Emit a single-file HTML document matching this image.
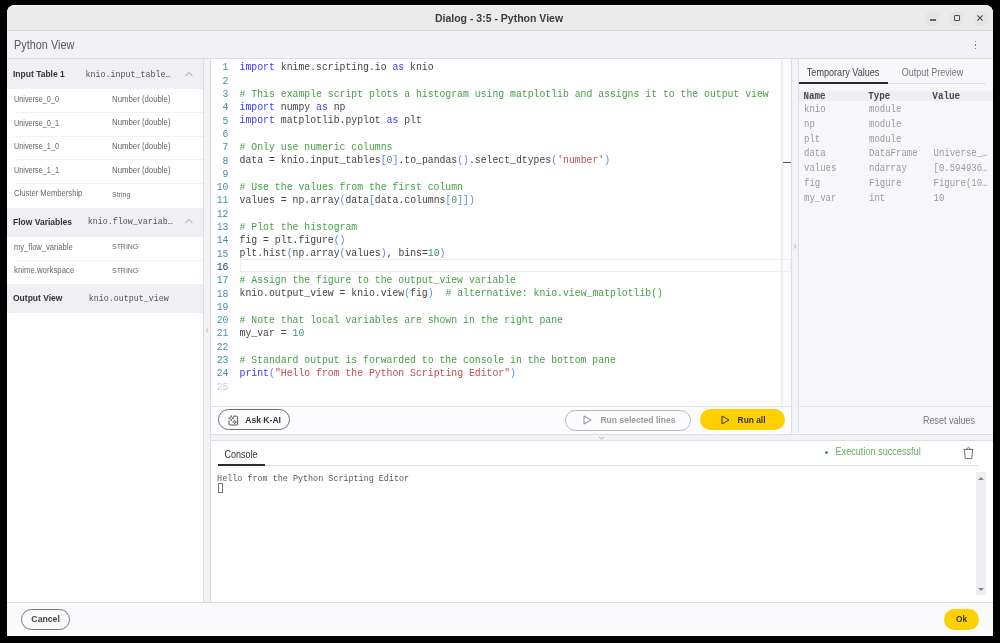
<!DOCTYPE html>
<html><head><meta charset="utf-8"><style>
html,body{margin:0;padding:0;width:1000px;height:643px;overflow:hidden;background:#000;}
#root{position:absolute;left:0;top:0;width:1000px;height:643px;will-change:transform;}
#root>div,#root>svg{position:absolute;}
</style></head><body><div id="root">
<div style="left:0px;top:0px;width:1000px;height:643px;background:#000;"></div>
<div style="left:7px;top:5px;width:986px;height:631px;background:#fdfcfe;border-radius:8px 8px 0 0;overflow:hidden;"></div>
<div style="left:7px;top:5px;width:986px;height:25px;background:#ebebeb;border-radius:8px 8px 0 0;box-shadow:inset 0 1px 0 #f7f7f7;"></div>
<div style="left:7px;top:29.6px;width:986px;height:1.6px;background:#d9d9d9;"></div>
<div style="left:299.00px;top:13.11px;font-family:'Liberation Sans', sans-serif;font-size:10.5px;line-height:10.5px;color:#3c3c3c;font-weight:bold;white-space:pre;width:400px;text-align:center;">Dialog - 3:5 - Python View</div>
<div style="left:925.25px;top:10.899999999999999px;width:15px;height:15px;background:#e5e5e5;border-radius:50%;"></div>
<div style="left:948.9px;top:10.899999999999999px;width:15px;height:15px;background:#e5e5e5;border-radius:50%;"></div>
<div style="left:973.5px;top:10.899999999999999px;width:15px;height:15px;background:#e5e5e5;border-radius:50%;"></div>
<div style="left:930.2px;top:19.4px;width:5.6px;height:1.2px;background:#666;"></div>
<div style="left:953.8px;top:15px;width:6px;height:6px;border:1.1px solid #4a4a4a;border-radius:1px;box-sizing:border-box;"></div>
<svg style="left:977.2px;top:15px" width="6" height="6" viewBox="0 0 6 6"><path d="M0.4 0.4L5.6 5.6M5.6 0.4L0.4 5.6" stroke="#4a4a4a" stroke-width="1.1"/></svg>
<div style="left:7px;top:31px;width:986px;height:27px;background:#f2f1f5;"></div>
<div style="left:7px;top:57.6px;width:986px;height:1.6px;background:#dddce0;"></div>
<div style="left:14.00px;top:40.02px;font-family:'Liberation Sans', sans-serif;font-size:10.9px;line-height:10.9px;color:#5c5c5c;white-space:pre;transform:scaleY(1.12);transform-origin:0 9.23px;">Python View</div>
<div style="left:974.5px;top:40.9px;width:1.2px;height:1.2px;background:#666;border-radius:50%;"></div>
<div style="left:974.5px;top:44.4px;width:1.2px;height:1.2px;background:#666;border-radius:50%;"></div>
<div style="left:974.5px;top:47.9px;width:1.2px;height:1.2px;background:#666;border-radius:50%;"></div>
<div style="left:7px;top:59px;width:196px;height:543px;background:#fff;"></div>
<div style="left:203px;top:59px;width:1px;height:543px;background:#dedde1;"></div>
<div style="left:204px;top:59px;width:6px;height:543px;background:#f3f2f6;"></div>
<div style="left:210px;top:59px;width:1px;height:543px;background:#dedde1;"></div>
<div style="left:7px;top:59px;width:196px;height:29.599999999999994px;background:#f0eff3;"></div>
<div style="left:13.00px;top:70.20px;font-family:'Liberation Sans', sans-serif;font-size:8.5px;line-height:8.5px;color:#333;font-weight:bold;white-space:pre;transform:scaleY(1.12);transform-origin:0 7.20px;">Input Table 1</div>
<div style="left:85.60px;top:70.52px;font-family:'Liberation Mono', monospace;font-size:8.33px;line-height:8.33px;color:#555;white-space:pre;transform:scaleY(1.12);transform-origin:0 6.38px;">knio.input_table…</div>
<svg style="left:185px;top:70.5px" width="8" height="6" viewBox="0 0 8 6"><path d="M0.5 5L4 1.5L7.5 5" stroke="#999" stroke-width="1" fill="none"/></svg>
<div style="left:14.00px;top:96.12px;font-family:'Liberation Sans', sans-serif;font-size:7.3px;line-height:7.3px;color:#666;white-space:pre;transform:scaleY(1.12);transform-origin:0 6.18px;">Universe_0_0</div>
<div style="left:112.00px;top:95.70px;font-family:'Liberation Sans', sans-serif;font-size:7.8px;line-height:7.8px;color:#666;white-space:pre;transform:scaleY(1.12);transform-origin:0 6.60px;">Number (double)</div>
<div style="left:16px;top:111.89999999999999px;width:187px;height:0.8px;background:#f2f2f4;"></div>
<div style="left:14.00px;top:119.72px;font-family:'Liberation Sans', sans-serif;font-size:7.3px;line-height:7.3px;color:#666;white-space:pre;transform:scaleY(1.12);transform-origin:0 6.18px;">Universe_0_1</div>
<div style="left:112.00px;top:119.30px;font-family:'Liberation Sans', sans-serif;font-size:7.8px;line-height:7.8px;color:#666;white-space:pre;transform:scaleY(1.12);transform-origin:0 6.60px;">Number (double)</div>
<div style="left:16px;top:135.5px;width:187px;height:0.8px;background:#f2f2f4;"></div>
<div style="left:14.00px;top:143.32px;font-family:'Liberation Sans', sans-serif;font-size:7.3px;line-height:7.3px;color:#666;white-space:pre;transform:scaleY(1.12);transform-origin:0 6.18px;">Universe_1_0</div>
<div style="left:112.00px;top:142.90px;font-family:'Liberation Sans', sans-serif;font-size:7.8px;line-height:7.8px;color:#666;white-space:pre;transform:scaleY(1.12);transform-origin:0 6.60px;">Number (double)</div>
<div style="left:16px;top:159.1px;width:187px;height:0.8px;background:#f2f2f4;"></div>
<div style="left:14.00px;top:166.92px;font-family:'Liberation Sans', sans-serif;font-size:7.3px;line-height:7.3px;color:#666;white-space:pre;transform:scaleY(1.12);transform-origin:0 6.18px;">Universe_1_1</div>
<div style="left:112.00px;top:166.50px;font-family:'Liberation Sans', sans-serif;font-size:7.8px;line-height:7.8px;color:#666;white-space:pre;transform:scaleY(1.12);transform-origin:0 6.60px;">Number (double)</div>
<div style="left:16px;top:182.7px;width:187px;height:0.8px;background:#f2f2f4;"></div>
<div style="left:14.00px;top:190.22px;font-family:'Liberation Sans', sans-serif;font-size:7.65px;line-height:7.65px;color:#666;white-space:pre;transform:scaleY(1.12);transform-origin:0 6.48px;">Cluster Membership</div>
<div style="left:112.00px;top:190.77px;font-family:'Liberation Sans', sans-serif;font-size:7.0px;line-height:7.0px;color:#666;white-space:pre;transform:scaleY(1.12);transform-origin:0 5.93px;">String</div>
<div style="left:7px;top:207.5px;width:196px;height:29.30000000000001px;background:#f0eff3;"></div>
<div style="left:13.00px;top:217.90px;font-family:'Liberation Sans', sans-serif;font-size:8.5px;line-height:8.5px;color:#333;font-weight:bold;white-space:pre;transform:scaleY(1.12);transform-origin:0 7.20px;">Flow Variables</div>
<div style="left:87.80px;top:218.22px;font-family:'Liberation Mono', monospace;font-size:8.33px;line-height:8.33px;color:#555;white-space:pre;transform:scaleY(1.12);transform-origin:0 6.38px;">knio.flow_variab…</div>
<svg style="left:185px;top:218px" width="8" height="6" viewBox="0 0 8 6"><path d="M0.5 5L4 1.5L7.5 5" stroke="#999" stroke-width="1" fill="none"/></svg>
<div style="left:14.00px;top:243.77px;font-family:'Liberation Sans', sans-serif;font-size:7.6px;line-height:7.6px;color:#666;white-space:pre;transform:scaleY(1.12);transform-origin:0 6.43px;">my_flow_variable</div>
<div style="left:112.00px;top:244.33px;font-family:'Liberation Sans', sans-serif;font-size:6.94px;line-height:6.94px;color:#666;white-space:pre;transform:scaleY(1.12);transform-origin:0 5.87px;">STRING</div>
<div style="left:16px;top:259.6px;width:187px;height:0.8px;background:#f2f2f4;"></div>
<div style="left:14.00px;top:267.20px;font-family:'Liberation Sans', sans-serif;font-size:7.8px;line-height:7.8px;color:#666;white-space:pre;transform:scaleY(1.12);transform-origin:0 6.60px;">knime.workspace</div>
<div style="left:112.00px;top:267.93px;font-family:'Liberation Sans', sans-serif;font-size:6.94px;line-height:6.94px;color:#666;white-space:pre;transform:scaleY(1.12);transform-origin:0 5.87px;">STRING</div>
<div style="left:7px;top:283.5px;width:196px;height:29.30000000000001px;background:#f0eff3;"></div>
<div style="left:13.00px;top:294.40px;font-family:'Liberation Sans', sans-serif;font-size:8.5px;line-height:8.5px;color:#333;font-weight:bold;white-space:pre;transform:scaleY(1.12);transform-origin:0 7.20px;">Output View</div>
<div style="left:88.80px;top:295.32px;font-family:'Liberation Mono', monospace;font-size:8.33px;line-height:8.33px;color:#555;white-space:pre;transform:scaleY(1.12);transform-origin:0 6.38px;">knio.output_view</div>
<svg style="left:204.5px;top:328px" width="4" height="5" viewBox="0 0 4 5"><path d="M3.2 0.5L1 2.5L3.2 4.5" stroke="#aaa" stroke-width="0.9" fill="none"/></svg>
<div style="left:211px;top:59px;width:580px;height:347px;background:#fffeff;"></div>
<div style="left:781.2px;top:59px;width:1.6px;height:347px;background:#efeff2;"></div>
<div style="left:783px;top:59px;width:8px;height:347px;background:#fcfcfd;"></div>
<div style="left:782.8px;top:161.5px;width:8.5px;height:1.8px;background:#555;"></div>
<div style="left:791px;top:59px;width:1px;height:374px;background:#dedde1;"></div>
<div style="left:792px;top:59px;width:6px;height:374px;background:#f3f2f6;"></div>
<div style="left:798px;top:59px;width:1px;height:374px;background:#dedde1;"></div>
<div style="left:240px;top:259.00000000000006px;width:551px;height:13.2px;border:1px solid #eeeeee;box-sizing:border-box;"></div>
<div style="left:-171.50px;top:63.49px;font-family:'Liberation Mono', monospace;font-size:9.8px;line-height:9.8px;color:#4a8fa6;white-space:pre;width:400px;text-align:right;transform:scaleY(1.08);transform-origin:0 7.51px;">1</div>
<div style="left:239.60px;top:62.99px;font-family:'Liberation Mono', monospace;font-size:9.8px;line-height:9.8px;color:#444444;white-space:pre;transform:scaleY(1.12);transform-origin:0 7.51px;"><span style="color:#3a3aff">import</span> knime.scripting.io <span style="color:#3a3aff">as</span> knio</div>
<div style="left:-171.50px;top:76.79px;font-family:'Liberation Mono', monospace;font-size:9.8px;line-height:9.8px;color:#4a8fa6;white-space:pre;width:400px;text-align:right;transform:scaleY(1.08);transform-origin:0 7.51px;">2</div>
<div style="left:-171.50px;top:90.09px;font-family:'Liberation Mono', monospace;font-size:9.8px;line-height:9.8px;color:#4a8fa6;white-space:pre;width:400px;text-align:right;transform:scaleY(1.08);transform-origin:0 7.51px;">3</div>
<div style="left:239.60px;top:89.59px;font-family:'Liberation Mono', monospace;font-size:9.8px;line-height:9.8px;color:#444444;white-space:pre;transform:scaleY(1.12);transform-origin:0 7.51px;"><span style="color:#46a046"># This example script plots a histogram using matplotlib and assigns it to the output view</span></div>
<div style="left:-171.50px;top:103.39px;font-family:'Liberation Mono', monospace;font-size:9.8px;line-height:9.8px;color:#4a8fa6;white-space:pre;width:400px;text-align:right;transform:scaleY(1.08);transform-origin:0 7.51px;">4</div>
<div style="left:239.60px;top:102.89px;font-family:'Liberation Mono', monospace;font-size:9.8px;line-height:9.8px;color:#444444;white-space:pre;transform:scaleY(1.12);transform-origin:0 7.51px;"><span style="color:#3a3aff">import</span> numpy <span style="color:#3a3aff">as</span> np</div>
<div style="left:-171.50px;top:116.69px;font-family:'Liberation Mono', monospace;font-size:9.8px;line-height:9.8px;color:#4a8fa6;white-space:pre;width:400px;text-align:right;transform:scaleY(1.08);transform-origin:0 7.51px;">5</div>
<div style="left:239.60px;top:116.19px;font-family:'Liberation Mono', monospace;font-size:9.8px;line-height:9.8px;color:#444444;white-space:pre;transform:scaleY(1.12);transform-origin:0 7.51px;"><span style="color:#3a3aff">import</span> matplotlib.pyplot <span style="color:#3a3aff">as</span> plt</div>
<div style="left:-171.50px;top:129.99px;font-family:'Liberation Mono', monospace;font-size:9.8px;line-height:9.8px;color:#4a8fa6;white-space:pre;width:400px;text-align:right;transform:scaleY(1.08);transform-origin:0 7.51px;">6</div>
<div style="left:-171.50px;top:143.29px;font-family:'Liberation Mono', monospace;font-size:9.8px;line-height:9.8px;color:#4a8fa6;white-space:pre;width:400px;text-align:right;transform:scaleY(1.08);transform-origin:0 7.51px;">7</div>
<div style="left:239.60px;top:142.79px;font-family:'Liberation Mono', monospace;font-size:9.8px;line-height:9.8px;color:#444444;white-space:pre;transform:scaleY(1.12);transform-origin:0 7.51px;"><span style="color:#46a046"># Only use numeric columns</span></div>
<div style="left:-171.50px;top:156.59px;font-family:'Liberation Mono', monospace;font-size:9.8px;line-height:9.8px;color:#4a8fa6;white-space:pre;width:400px;text-align:right;transform:scaleY(1.08);transform-origin:0 7.51px;">8</div>
<div style="left:239.60px;top:156.09px;font-family:'Liberation Mono', monospace;font-size:9.8px;line-height:9.8px;color:#444444;white-space:pre;transform:scaleY(1.12);transform-origin:0 7.51px;">data = knio.input_tables<span style="color:#5a88f0">[</span><span style="color:#3a9070">0</span><span style="color:#5a88f0">]</span>.to_pandas<span style="color:#5a88f0">()</span>.select_dtypes<span style="color:#5a88f0">(</span><span style="color:#c05050">'number'</span><span style="color:#5a88f0">)</span></div>
<div style="left:-171.50px;top:169.89px;font-family:'Liberation Mono', monospace;font-size:9.8px;line-height:9.8px;color:#4a8fa6;white-space:pre;width:400px;text-align:right;transform:scaleY(1.08);transform-origin:0 7.51px;">9</div>
<div style="left:-171.50px;top:183.19px;font-family:'Liberation Mono', monospace;font-size:9.8px;line-height:9.8px;color:#4a8fa6;white-space:pre;width:400px;text-align:right;transform:scaleY(1.08);transform-origin:0 7.51px;">10</div>
<div style="left:239.60px;top:182.69px;font-family:'Liberation Mono', monospace;font-size:9.8px;line-height:9.8px;color:#444444;white-space:pre;transform:scaleY(1.12);transform-origin:0 7.51px;"><span style="color:#46a046"># Use the values from the first column</span></div>
<div style="left:-171.50px;top:196.49px;font-family:'Liberation Mono', monospace;font-size:9.8px;line-height:9.8px;color:#4a8fa6;white-space:pre;width:400px;text-align:right;transform:scaleY(1.08);transform-origin:0 7.51px;">11</div>
<div style="left:239.60px;top:195.99px;font-family:'Liberation Mono', monospace;font-size:9.8px;line-height:9.8px;color:#444444;white-space:pre;transform:scaleY(1.12);transform-origin:0 7.51px;">values = np.array<span style="color:#5a88f0">(</span>data<span style="color:#5a88f0">[</span>data.columns<span style="color:#5a88f0">[</span><span style="color:#3a9070">0</span><span style="color:#5a88f0">]]</span><span style="color:#5a88f0">)</span></div>
<div style="left:-171.50px;top:209.79px;font-family:'Liberation Mono', monospace;font-size:9.8px;line-height:9.8px;color:#4a8fa6;white-space:pre;width:400px;text-align:right;transform:scaleY(1.08);transform-origin:0 7.51px;">12</div>
<div style="left:-171.50px;top:223.09px;font-family:'Liberation Mono', monospace;font-size:9.8px;line-height:9.8px;color:#4a8fa6;white-space:pre;width:400px;text-align:right;transform:scaleY(1.08);transform-origin:0 7.51px;">13</div>
<div style="left:239.60px;top:222.59px;font-family:'Liberation Mono', monospace;font-size:9.8px;line-height:9.8px;color:#444444;white-space:pre;transform:scaleY(1.12);transform-origin:0 7.51px;"><span style="color:#46a046"># Plot the histogram</span></div>
<div style="left:-171.50px;top:236.39px;font-family:'Liberation Mono', monospace;font-size:9.8px;line-height:9.8px;color:#4a8fa6;white-space:pre;width:400px;text-align:right;transform:scaleY(1.08);transform-origin:0 7.51px;">14</div>
<div style="left:239.60px;top:235.89px;font-family:'Liberation Mono', monospace;font-size:9.8px;line-height:9.8px;color:#444444;white-space:pre;transform:scaleY(1.12);transform-origin:0 7.51px;">fig = plt.figure<span style="color:#5a88f0">()</span></div>
<div style="left:-171.50px;top:249.69px;font-family:'Liberation Mono', monospace;font-size:9.8px;line-height:9.8px;color:#4a8fa6;white-space:pre;width:400px;text-align:right;transform:scaleY(1.08);transform-origin:0 7.51px;">15</div>
<div style="left:239.60px;top:249.19px;font-family:'Liberation Mono', monospace;font-size:9.8px;line-height:9.8px;color:#444444;white-space:pre;transform:scaleY(1.12);transform-origin:0 7.51px;">plt.hist<span style="color:#5a88f0">(</span>np.array<span style="color:#5a88f0">(</span>values<span style="color:#5a88f0">)</span>, bins=<span style="color:#3a9070">10</span><span style="color:#5a88f0">)</span></div>
<div style="left:-171.50px;top:262.99px;font-family:'Liberation Mono', monospace;font-size:9.8px;line-height:9.8px;color:#1b3a7a;white-space:pre;width:400px;text-align:right;transform:scaleY(1.08);transform-origin:0 7.51px;">16</div>
<div style="left:-171.50px;top:276.29px;font-family:'Liberation Mono', monospace;font-size:9.8px;line-height:9.8px;color:#4a8fa6;white-space:pre;width:400px;text-align:right;transform:scaleY(1.08);transform-origin:0 7.51px;">17</div>
<div style="left:239.60px;top:275.79px;font-family:'Liberation Mono', monospace;font-size:9.8px;line-height:9.8px;color:#444444;white-space:pre;transform:scaleY(1.12);transform-origin:0 7.51px;"><span style="color:#46a046"># Assign the figure to the output_view variable</span></div>
<div style="left:-171.50px;top:289.59px;font-family:'Liberation Mono', monospace;font-size:9.8px;line-height:9.8px;color:#4a8fa6;white-space:pre;width:400px;text-align:right;transform:scaleY(1.08);transform-origin:0 7.51px;">18</div>
<div style="left:239.60px;top:289.09px;font-family:'Liberation Mono', monospace;font-size:9.8px;line-height:9.8px;color:#444444;white-space:pre;transform:scaleY(1.12);transform-origin:0 7.51px;">knio.output_view = knio.view<span style="color:#5a88f0">(</span>fig<span style="color:#5a88f0">)</span>  <span style="color:#46a046"># alternative: knio.view_matplotlib()</span></div>
<div style="left:-171.50px;top:302.89px;font-family:'Liberation Mono', monospace;font-size:9.8px;line-height:9.8px;color:#4a8fa6;white-space:pre;width:400px;text-align:right;transform:scaleY(1.08);transform-origin:0 7.51px;">19</div>
<div style="left:-171.50px;top:316.19px;font-family:'Liberation Mono', monospace;font-size:9.8px;line-height:9.8px;color:#4a8fa6;white-space:pre;width:400px;text-align:right;transform:scaleY(1.08);transform-origin:0 7.51px;">20</div>
<div style="left:239.60px;top:315.69px;font-family:'Liberation Mono', monospace;font-size:9.8px;line-height:9.8px;color:#444444;white-space:pre;transform:scaleY(1.12);transform-origin:0 7.51px;"><span style="color:#46a046"># Note that local variables are shown in the right pane</span></div>
<div style="left:-171.50px;top:329.49px;font-family:'Liberation Mono', monospace;font-size:9.8px;line-height:9.8px;color:#4a8fa6;white-space:pre;width:400px;text-align:right;transform:scaleY(1.08);transform-origin:0 7.51px;">21</div>
<div style="left:239.60px;top:328.99px;font-family:'Liberation Mono', monospace;font-size:9.8px;line-height:9.8px;color:#444444;white-space:pre;transform:scaleY(1.12);transform-origin:0 7.51px;">my_var = <span style="color:#3a9070">10</span></div>
<div style="left:-171.50px;top:342.79px;font-family:'Liberation Mono', monospace;font-size:9.8px;line-height:9.8px;color:#4a8fa6;white-space:pre;width:400px;text-align:right;transform:scaleY(1.08);transform-origin:0 7.51px;">22</div>
<div style="left:-171.50px;top:356.09px;font-family:'Liberation Mono', monospace;font-size:9.8px;line-height:9.8px;color:#4a8fa6;white-space:pre;width:400px;text-align:right;transform:scaleY(1.08);transform-origin:0 7.51px;">23</div>
<div style="left:239.60px;top:355.59px;font-family:'Liberation Mono', monospace;font-size:9.8px;line-height:9.8px;color:#444444;white-space:pre;transform:scaleY(1.12);transform-origin:0 7.51px;"><span style="color:#46a046"># Standard output is forwarded to the console in the bottom pane</span></div>
<div style="left:-171.50px;top:369.39px;font-family:'Liberation Mono', monospace;font-size:9.8px;line-height:9.8px;color:#4a8fa6;white-space:pre;width:400px;text-align:right;transform:scaleY(1.08);transform-origin:0 7.51px;">24</div>
<div style="left:239.60px;top:368.89px;font-family:'Liberation Mono', monospace;font-size:9.8px;line-height:9.8px;color:#444444;white-space:pre;transform:scaleY(1.12);transform-origin:0 7.51px;"><span style="color:#3a3aff">print</span><span style="color:#5a88f0">(</span><span style="color:#c05050">"Hello from the Python Scripting Editor"</span><span style="color:#5a88f0">)</span></div>
<div style="left:-171.50px;top:382.69px;font-family:'Liberation Mono', monospace;font-size:9.8px;line-height:9.8px;color:#b7d4de;white-space:pre;width:400px;text-align:right;transform:scaleY(1.08);transform-origin:0 7.51px;">25</div>
<div style="left:211px;top:406px;width:580px;height:1px;background:#e4e3e7;"></div>
<div style="left:211px;top:407px;width:580px;height:27px;background:#fcfbfe;"></div>
<div style="left:218px;top:409.1px;width:72px;height:21.3px;border:1px solid #6e6e6e;border-radius:11px;box-sizing:border-box;"></div>
<div style="left:245.20px;top:416.02px;font-family:'Liberation Sans', sans-serif;font-size:8.6px;line-height:8.6px;color:#333;font-weight:bold;white-space:pre;transform:scaleY(1.12);transform-origin:0 7.28px;">Ask K-AI</div>
<svg style="left:228px;top:414.5px" width="11" height="11" viewBox="0 0 11 11"><path d="M5 1.2H8.6A1 1 0 0 1 9.6 2.2V9A1 1 0 0 1 8.6 10H2A1 1 0 0 1 1 9V5.4" stroke="#555" stroke-width="1" fill="none"/><path d="M3.2 0.4L3.9 2.5L6 3.2L3.9 3.9L3.2 6L2.5 3.9L0.4 3.2L2.5 2.5Z" stroke="#555" stroke-width="0.7" fill="none" stroke-linejoin="round"/><path d="M6.6 5L7.1 6.5L8.6 7L7.1 7.5L6.6 9L6.1 7.5L4.6 7L6.1 6.5Z" stroke="#555" stroke-width="0.7" fill="none" stroke-linejoin="round"/></svg>
<div style="left:565.3px;top:409.6px;width:126.2px;height:21px;border:1px solid #b5b5b5;border-radius:11px;box-sizing:border-box;"></div>
<div style="left:600.40px;top:416.16px;font-family:'Liberation Sans', sans-serif;font-size:8.55px;line-height:8.55px;color:#999;font-weight:bold;white-space:pre;transform:scaleY(1.12);transform-origin:0 7.24px;">Run selected lines</div>
<svg style="left:583px;top:415px" width="9" height="10" viewBox="0 0 9 10"><path d="M1 1L8 5L1 9Z" stroke="#999" stroke-width="1.1" fill="none" stroke-linejoin="round"/></svg>
<div style="left:700.4px;top:409px;width:84.2px;height:21.2px;background:#ffd000;border-radius:11px;"></div>
<div style="left:737.60px;top:416.19px;font-family:'Liberation Sans', sans-serif;font-size:8.4px;line-height:8.4px;color:#333;font-weight:bold;white-space:pre;transform:scaleY(1.12);transform-origin:0 7.11px;">Run all</div>
<svg style="left:720.5px;top:414.7px" width="9" height="10" viewBox="0 0 9 10"><path d="M1 1L8 5L1 9Z" stroke="#333" stroke-width="1" fill="none" stroke-linejoin="round"/></svg>
<div style="left:799px;top:59px;width:194px;height:374px;background:#f8f7fb;"></div>
<div style="left:806.80px;top:69.20px;font-family:'Liberation Sans', sans-serif;font-size:9.1px;line-height:9.1px;color:#444;white-space:pre;transform:scaleY(1.12);transform-origin:0 7.70px;">Temporary Values</div>
<div style="left:901.70px;top:69.28px;font-family:'Liberation Sans', sans-serif;font-size:9px;line-height:9px;color:#777;white-space:pre;transform:scaleY(1.12);transform-origin:0 7.62px;">Output Preview</div>
<div style="left:799px;top:83px;width:187px;height:1px;background:#e0dfe3;"></div>
<div style="left:799px;top:82px;width:89px;height:2.2px;background:#2b2b2b;"></div>
<div style="left:799px;top:87.5px;width:194px;height:13.5px;background:linear-gradient(#f8f7fb,#eeedf1 40%,#efeef2);"></div>
<div style="left:803.50px;top:91.95px;font-family:'Liberation Mono', monospace;font-size:9.2px;line-height:9.2px;color:#4a4a4a;font-weight:bold;white-space:pre;transform:scaleY(1.12);transform-origin:0 7.05px;">Name</div>
<div style="left:868.20px;top:91.95px;font-family:'Liberation Mono', monospace;font-size:9.2px;line-height:9.2px;color:#4a4a4a;font-weight:bold;white-space:pre;transform:scaleY(1.12);transform-origin:0 7.05px;">Type</div>
<div style="left:932.30px;top:91.88px;font-family:'Liberation Mono', monospace;font-size:9.3px;line-height:9.3px;color:#4a4a4a;font-weight:bold;white-space:pre;transform:scaleY(1.12);transform-origin:0 7.12px;">Value</div>
<div style="left:804.00px;top:106.11px;font-family:'Liberation Mono', monospace;font-size:9.0px;line-height:9.0px;color:#999;white-space:pre;transform:scaleY(1.12);transform-origin:0 6.89px;">knio</div>
<div style="left:869.00px;top:106.11px;font-family:'Liberation Mono', monospace;font-size:9.0px;line-height:9.0px;color:#999;white-space:pre;transform:scaleY(1.12);transform-origin:0 6.89px;">module</div>
<div style="left:933.50px;top:106.11px;font-family:'Liberation Mono', monospace;font-size:9.0px;line-height:9.0px;color:#999;white-space:pre;transform:scaleY(1.12);transform-origin:0 6.89px;"></div>
<div style="left:799px;top:116.0px;width:194px;height:0.8px;background:#f5f4f8;"></div>
<div style="left:804.00px;top:120.86px;font-family:'Liberation Mono', monospace;font-size:9.0px;line-height:9.0px;color:#999;white-space:pre;transform:scaleY(1.12);transform-origin:0 6.89px;">np</div>
<div style="left:869.00px;top:120.86px;font-family:'Liberation Mono', monospace;font-size:9.0px;line-height:9.0px;color:#999;white-space:pre;transform:scaleY(1.12);transform-origin:0 6.89px;">module</div>
<div style="left:933.50px;top:120.86px;font-family:'Liberation Mono', monospace;font-size:9.0px;line-height:9.0px;color:#999;white-space:pre;transform:scaleY(1.12);transform-origin:0 6.89px;"></div>
<div style="left:799px;top:130.75px;width:194px;height:0.8px;background:#f5f4f8;"></div>
<div style="left:804.00px;top:135.61px;font-family:'Liberation Mono', monospace;font-size:9.0px;line-height:9.0px;color:#999;white-space:pre;transform:scaleY(1.12);transform-origin:0 6.89px;">plt</div>
<div style="left:869.00px;top:135.61px;font-family:'Liberation Mono', monospace;font-size:9.0px;line-height:9.0px;color:#999;white-space:pre;transform:scaleY(1.12);transform-origin:0 6.89px;">module</div>
<div style="left:933.50px;top:135.61px;font-family:'Liberation Mono', monospace;font-size:9.0px;line-height:9.0px;color:#999;white-space:pre;transform:scaleY(1.12);transform-origin:0 6.89px;"></div>
<div style="left:799px;top:145.5px;width:194px;height:0.8px;background:#f5f4f8;"></div>
<div style="left:804.00px;top:150.36px;font-family:'Liberation Mono', monospace;font-size:9.0px;line-height:9.0px;color:#999;white-space:pre;transform:scaleY(1.12);transform-origin:0 6.89px;">data</div>
<div style="left:869.00px;top:150.36px;font-family:'Liberation Mono', monospace;font-size:9.0px;line-height:9.0px;color:#999;white-space:pre;transform:scaleY(1.12);transform-origin:0 6.89px;">DataFrame</div>
<div style="left:933.50px;top:150.36px;font-family:'Liberation Mono', monospace;font-size:9.0px;line-height:9.0px;color:#999;white-space:pre;transform:scaleY(1.12);transform-origin:0 6.89px;">Universe_…</div>
<div style="left:799px;top:160.25px;width:194px;height:0.8px;background:#f5f4f8;"></div>
<div style="left:804.00px;top:165.11px;font-family:'Liberation Mono', monospace;font-size:9.0px;line-height:9.0px;color:#999;white-space:pre;transform:scaleY(1.12);transform-origin:0 6.89px;">values</div>
<div style="left:869.00px;top:165.11px;font-family:'Liberation Mono', monospace;font-size:9.0px;line-height:9.0px;color:#999;white-space:pre;transform:scaleY(1.12);transform-origin:0 6.89px;">ndarray</div>
<div style="left:933.50px;top:165.11px;font-family:'Liberation Mono', monospace;font-size:9.0px;line-height:9.0px;color:#999;white-space:pre;transform:scaleY(1.12);transform-origin:0 6.89px;">[0.594936…</div>
<div style="left:799px;top:175.0px;width:194px;height:0.8px;background:#f5f4f8;"></div>
<div style="left:804.00px;top:179.86px;font-family:'Liberation Mono', monospace;font-size:9.0px;line-height:9.0px;color:#999;white-space:pre;transform:scaleY(1.12);transform-origin:0 6.89px;">fig</div>
<div style="left:869.00px;top:179.86px;font-family:'Liberation Mono', monospace;font-size:9.0px;line-height:9.0px;color:#999;white-space:pre;transform:scaleY(1.12);transform-origin:0 6.89px;">Figure</div>
<div style="left:933.50px;top:179.86px;font-family:'Liberation Mono', monospace;font-size:9.0px;line-height:9.0px;color:#999;white-space:pre;transform:scaleY(1.12);transform-origin:0 6.89px;">Figure(10…</div>
<div style="left:799px;top:189.75px;width:194px;height:0.8px;background:#f5f4f8;"></div>
<div style="left:804.00px;top:194.61px;font-family:'Liberation Mono', monospace;font-size:9.0px;line-height:9.0px;color:#999;white-space:pre;transform:scaleY(1.12);transform-origin:0 6.89px;">my_var</div>
<div style="left:869.00px;top:194.61px;font-family:'Liberation Mono', monospace;font-size:9.0px;line-height:9.0px;color:#999;white-space:pre;transform:scaleY(1.12);transform-origin:0 6.89px;">int</div>
<div style="left:933.50px;top:194.61px;font-family:'Liberation Mono', monospace;font-size:9.0px;line-height:9.0px;color:#999;white-space:pre;transform:scaleY(1.12);transform-origin:0 6.89px;">10</div>
<div style="left:799px;top:204.5px;width:194px;height:0.8px;background:#f5f4f8;"></div>
<div style="left:799px;top:406px;width:194px;height:1px;background:#e4e3e7;"></div>
<div style="left:575.00px;top:416.98px;font-family:'Liberation Sans', sans-serif;font-size:9px;line-height:9px;color:#777;white-space:pre;width:400px;text-align:right;transform:scaleY(1.12);transform-origin:0 7.62px;">Reset values</div>
<div style="left:211px;top:434px;width:782px;height:1px;background:#dedde1;"></div>
<div style="left:211px;top:435px;width:782px;height:5px;background:#f3f2f6;"></div>
<div style="left:211px;top:440px;width:782px;height:1.4px;background:#dedde1;"></div>
<svg style="left:598px;top:435.5px" width="7" height="4" viewBox="0 0 7 4"><path d="M1 0.8L3.5 3.2L6 0.8" stroke="#aaa" stroke-width="0.9" fill="none"/></svg>
<div style="left:211px;top:441px;width:782px;height:161px;background:#fffeff;"></div>
<div style="left:224.50px;top:451.18px;font-family:'Liberation Sans', sans-serif;font-size:9px;line-height:9px;color:#333;white-space:pre;transform:scaleY(1.12);transform-origin:0 7.62px;">Console</div>
<div style="left:217.8px;top:464.6px;width:761px;height:1px;background:#e0dfe3;"></div>
<div style="left:217.8px;top:464px;width:47.2px;height:2.2px;background:#2b2b2b;"></div>
<div style="left:825px;top:450.5px;width:3px;height:3px;background:#3d9a3d;border-radius:50%;"></div>
<div style="left:835.50px;top:448.06px;font-family:'Liberation Sans', sans-serif;font-size:9.14px;line-height:9.14px;color:#62ad62;white-space:pre;transform:scaleY(1.12);transform-origin:0 7.74px;">Execution successful</div>
<svg style="left:962px;top:446px" width="13" height="14" viewBox="0 0 13 14"><path d="M1.6 3.4H11.4M2.4 3.6L3.3 12.6H9.7L10.6 3.6M4.2 3.3L6.5 1.3L8.8 3.3" stroke="#666" stroke-width="0.95" fill="none" stroke-linejoin="round"/></svg>
<div style="left:217.10px;top:474.84px;font-family:'Liberation Mono', monospace;font-size:8.43px;line-height:8.43px;color:#5a5a5a;white-space:pre;transform:scaleY(1.12);transform-origin:0 6.46px;">Hello from the Python Scripting Editor</div>
<div style="left:217.8px;top:483px;width:5.2px;height:10px;border:1px solid #777;box-sizing:border-box;"></div>
<div style="left:975.8px;top:472px;width:10px;height:122.5px;background:#efeef2;"></div>
<svg style="left:977px;top:476px" width="8" height="5" viewBox="0 0 8 5"><path d="M1 4L4 1L7 4Z" fill="#888"/></svg>
<svg style="left:977px;top:587px" width="8" height="5" viewBox="0 0 8 5"><path d="M1 1L4 4L7 1Z" fill="#888"/></svg>
<div style="left:7px;top:601.5px;width:986px;height:1px;background:#dcdbdf;"></div>
<div style="left:7px;top:602.5px;width:986px;height:33.5px;background:#faf9fc;"></div>
<div style="left:21px;top:608.6px;width:48.6px;height:21px;border:1px solid #777;border-radius:11px;box-sizing:border-box;"></div>
<div style="left:-154.40px;top:614.94px;font-family:'Liberation Sans', sans-serif;font-size:8.7px;line-height:8.7px;color:#444;font-weight:bold;white-space:pre;width:400px;text-align:center;transform:scaleY(1.05);transform-origin:0 7.36px;">Cancel</div>
<div style="left:944px;top:609px;width:35px;height:20.5px;background:#ffd000;border-radius:11px;"></div>
<div style="left:761.50px;top:615.17px;font-family:'Liberation Sans', sans-serif;font-size:8.3px;line-height:8.3px;color:#333;font-weight:bold;white-space:pre;width:400px;text-align:center;transform:scaleY(1.12);transform-origin:0 7.03px;">Ok</div>
<svg style="left:793.3px;top:244px" width="4" height="5" viewBox="0 0 4 5"><path d="M0.8 0.5L3 2.5L0.8 4.5" stroke="#aaa" stroke-width="0.9" fill="none"/></svg>
</div></body></html>
